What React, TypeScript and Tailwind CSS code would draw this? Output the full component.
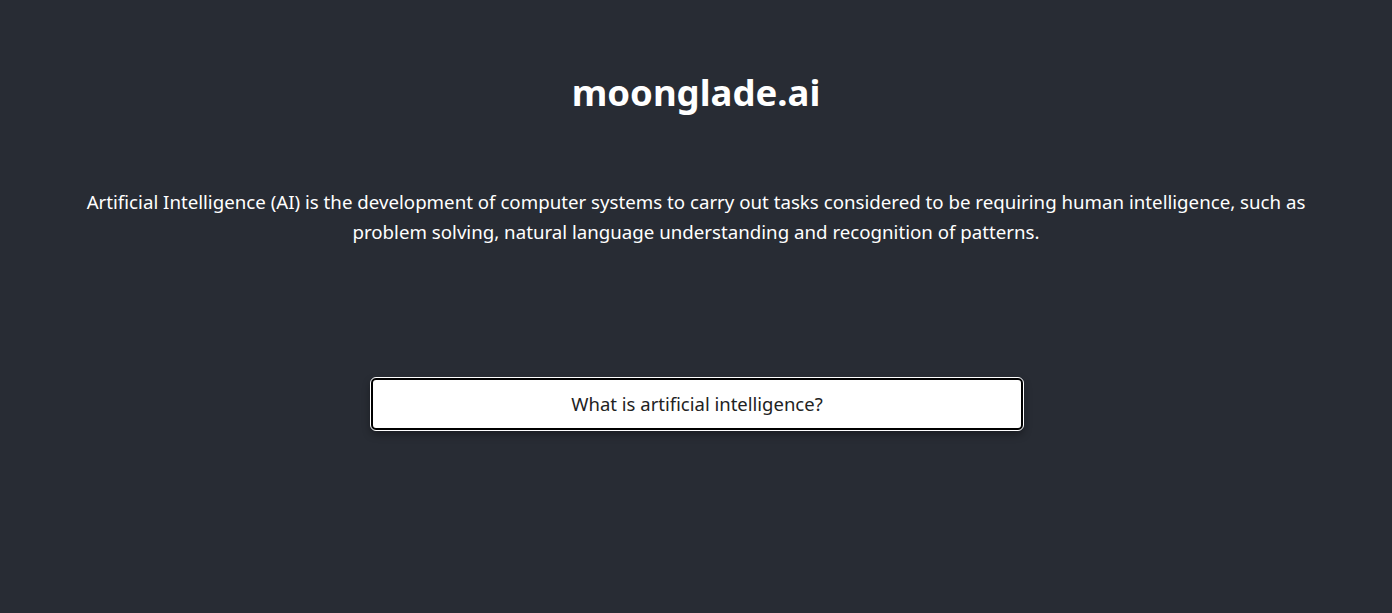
export default function App() {
  return (
    <div className="min-h-[613px] bg-[#282c34] text-white font-['Noto_Sans','Open_Sans',sans-serif] flex flex-col items-center text-center">
      <h1 className="mt-[64px] text-[36.5px] font-bold leading-[56px]">moonglade.ai</h1>
      <p className="mt-[67px] px-[60px] text-[18.7px] leading-[30px]">
        Artificial Intelligence (AI) is the development of computer systems to carry out tasks considered to be requiring
        human intelligence, such as problem solving, natural language understanding and recognition of patterns.
      </p>
      <button className="mt-[131px] ml-[2px] w-[652px] h-[52px] bg-white text-[#222] text-[18.5px] rounded-[5px] border-2 border-black outline outline-1 outline-white shadow-[0_4px_8px_rgba(0,0,0,0.4)]">
        What is artificial intelligence?
      </button>
    </div>
  )
}
